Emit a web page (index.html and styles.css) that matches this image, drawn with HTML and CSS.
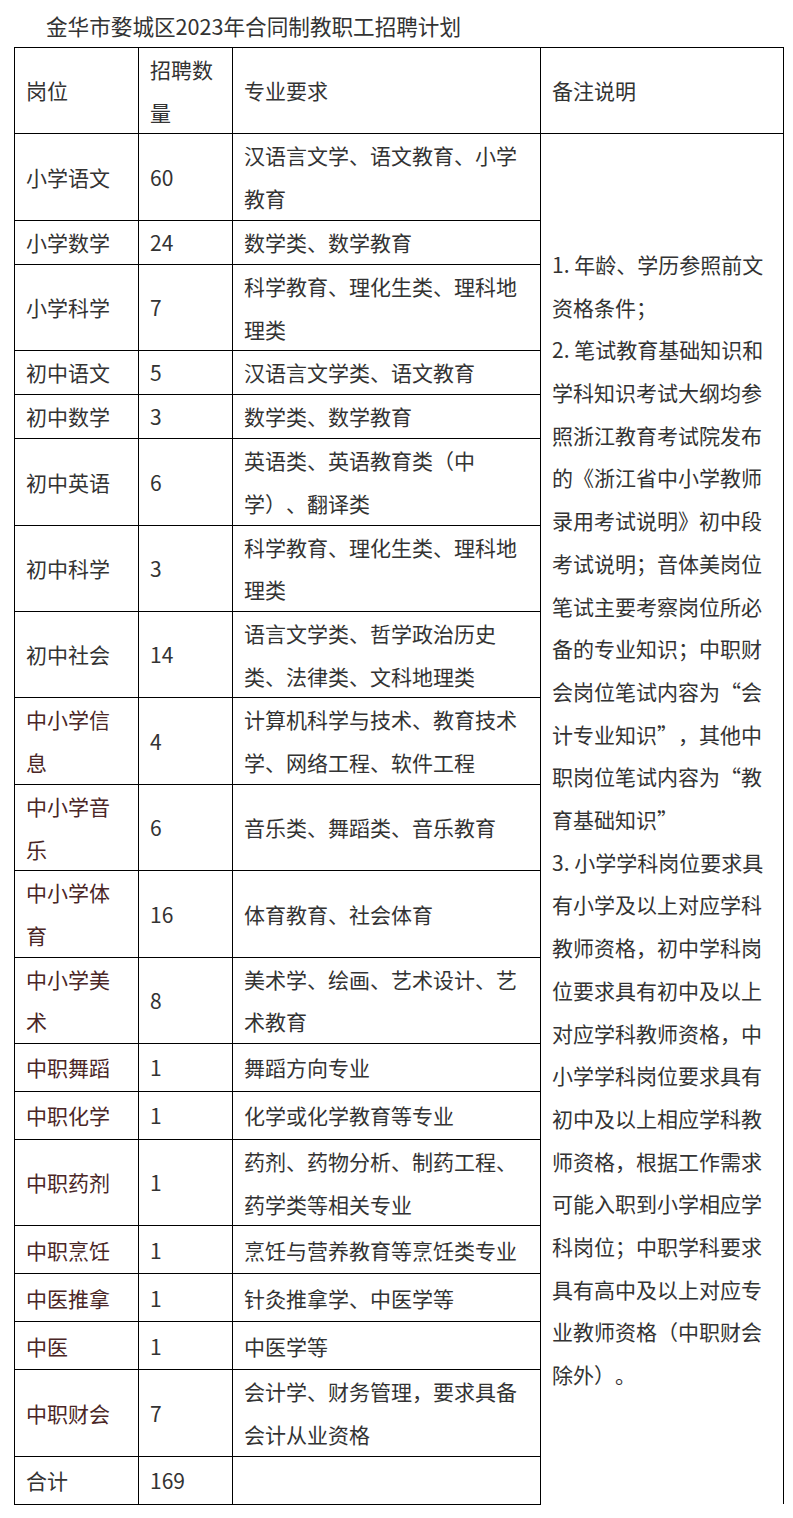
FILE: index.html
```html
<!DOCTYPE html>
<html lang="zh-CN">
<head>
<meta charset="utf-8">
<title>金华市婺城区2023年合同制教职工招聘计划</title>
<link rel="stylesheet" href="styles.css">
</head>
<body>
<div class="page">
  <p class="title">金华市婺城区2023年合同制教职工招聘计划</p>
  <table class="plan">
    <colgroup>
      <col class="c1"><col class="c2"><col class="c3"><col class="c4">
    </colgroup>
    <tr class="h2">
      <td>岗位</td><td>招聘数量</td><td>专业要求</td><td class="note-head">备注说明</td>
    </tr>
    <tr class="h2">
      <td>小学语文</td><td>60</td><td>汉语言文学、语文教育、小学教育</td>
      <td class="note" rowspan="20">
        <p>1. 年龄、学历参照前文资格条件；</p>
        <p>2. 笔试教育基础知识和学科知识考试大纲均参照浙江教育考试院发布的《浙江省中小学教师录用考试说明》初中段考试说明；音体美岗位笔试主要考察岗位所必备的专业知识；中职财会岗位笔试内容为“会计专业知识”，其他中职岗位笔试内容为“教育基础知识”</p>
        <p>3. 小学学科岗位要求具有小学及以上对应学科教师资格，初中学科岗位要求具有初中及以上对应学科教师资格，中小学学科岗位要求具有初中及以上相应学科教师资格，根据工作需求可能入职到小学相应学科岗位；中职学科要求具有高中及以上对应专业教师资格（中职财会除外）。</p>
      </td>
    </tr>
    <tr class="h1"><td>小学数学</td><td>24</td><td>数学类、数学教育</td></tr>
    <tr class="h2"><td>小学科学</td><td>7</td><td>科学教育、理化生类、理科地理类</td></tr>
    <tr class="h1"><td>初中语文</td><td>5</td><td>汉语言文学类、语文教育</td></tr>
    <tr class="h1"><td>初中数学</td><td>3</td><td>数学类、数学教育</td></tr>
    <tr class="h2"><td>初中英语</td><td>6</td><td>英语类、英语教育类（中学）、翻译类</td></tr>
    <tr class="h2"><td>初中科学</td><td>3</td><td>科学教育、理化生类、理科地理类</td></tr>
    <tr class="h2"><td>初中社会</td><td>14</td><td>语言文学类、哲学政治历史类、法律类、文科地理类</td></tr>
    <tr class="h2"><td class="red">中小学信息</td><td>4</td><td>计算机科学与技术、教育技术学、网络工程、软件工程</td></tr>
    <tr class="h2"><td class="red">中小学音乐</td><td>6</td><td>音乐类、舞蹈类、音乐教育</td></tr>
    <tr class="h2"><td class="red">中小学体育</td><td>16</td><td>体育教育、社会体育</td></tr>
    <tr class="h2"><td class="red">中小学美术</td><td>8</td><td>美术学、绘画、艺术设计、艺术教育</td></tr>
    <tr class="h1b"><td class="red">中职舞蹈</td><td>1</td><td>舞蹈方向专业</td></tr>
    <tr class="h1b"><td class="red">中职化学</td><td>1</td><td>化学或化学教育等专业</td></tr>
    <tr class="h2"><td class="red">中职药剂</td><td>1</td><td>药剂、药物分析、制药工程、药学类等相关专业</td></tr>
    <tr class="h1b"><td class="red">中职烹饪</td><td>1</td><td>烹饪与营养教育等烹饪类专业</td></tr>
    <tr class="h1b"><td class="red">中医推拿</td><td>1</td><td>针灸推拿学、中医学等</td></tr>
    <tr class="h1b"><td class="red">中医</td><td>1</td><td>中医学等</td></tr>
    <tr class="h2"><td class="red">中职财会</td><td>7</td><td>会计学、财务管理，要求具备会计从业资格</td></tr>
    <tr class="h1b"><td>合计</td><td>169</td><td></td></tr>
  </table>
</div>
</body>
</html>
```

FILE: styles.css
```css
html, body {
  margin: 0;
  padding: 0;
  background: #ffffff;
}

body {
  font-family: "Noto Sans CJK SC", "Noto Sans", sans-serif;
  color: #333333;
  font-size: 21px;
  line-height: 42.7px;
  text-spacing-trim: space-all;
}

.page {
  padding: 5px 0 0 14px;
}

.title {
  margin: 0 0 0 32px;
  font-size: 21.6px;
  line-height: 42px;
  color: #333333;
}

.plan {
  border-collapse: collapse;
  table-layout: fixed;
  width: 769px;
}

.c1 { width: 124px; }
.c2 { width: 94px; }
.c3 { width: 308px; }
.c4 { width: 243px; }

.plan td {
  border: 1px solid #000000;
  padding: 0 10px 0 11px;
  vertical-align: middle;
  word-break: break-all;
}

.plan tr.h2 td { height: 85.3px; }
.plan tr.h1 td { height: 43px; }
.plan tr.h1b td { height: 47px; }

.plan td.note {
  border-bottom: none;
  padding: 0 17px 0 11px;
}

.plan td.note-head {
  padding-left: 11px;
}

.note p {
  margin: 0;
}

.red {
  color: #4a2626;
}
```
